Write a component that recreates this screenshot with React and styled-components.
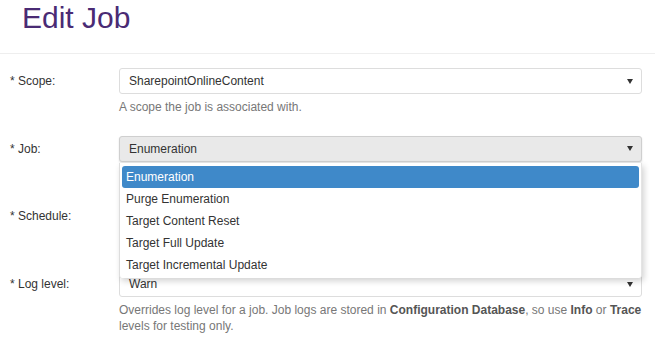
import React from "react";
import styled, { createGlobalStyle } from "styled-components";

const Global = createGlobalStyle`
  html, body { margin: 0; padding: 0; background: #fff; }
  body { font-family: "Liberation Sans", Arial, sans-serif; font-size: 12px; color: #333; }
`;

const Page = styled.div`
  width: 655px;
  height: 340px;
  overflow: hidden;
`;

const Header = styled.div`
  padding: 0 22px 17px;
  border-bottom: 1px solid #eee;
`;

const Title = styled.h1`
  margin: 0;
  font-size: 30px;
  line-height: 36px;
  font-weight: normal;
  color: #4a2b74;
`;

const Form = styled.div`
  padding: 14px 13px 0 10px;
`;

const Group = styled.div`
  display: grid;
  grid-template-columns: 109px 1fr;
  margin-bottom: 20.7px;
`;

const Label = styled.label`
  line-height: 26px;
  color: #333;
`;

const Field = styled.div`
  position: relative;
`;

const Select = styled.div`
  height: 26px;
  box-sizing: border-box;
  border: 1px solid ${(p) => (p.$open ? "#cfcfcf" : "#ddd")};
  border-radius: 3px;
  background: ${(p) => (p.$open ? "#e9e9e9" : "#fff")};
  box-shadow: ${(p) => (p.$open ? "0 1px 2px rgba(0,0,0,0.12)" : "none")};
  display: flex;
  align-items: center;
  padding: 0 8px 0 9px;
  color: #333;
`;

const Value = styled.span`
  flex: 1;
`;

const Arrow = styled.span`
  width: 0;
  height: 0;
  border-left: 3.5px solid transparent;
  border-right: 3.5px solid transparent;
  border-top: 5px solid #333;
`;

const Help = styled.div`
  margin-top: 5px;
  min-height: 16px;
  line-height: 16px;
  color: #777;
  b { color: #555; }
`;

const Menu = styled.ul`
  position: absolute;
  left: 0;
  right: 0;
  top: 27px;
  z-index: 10;
  margin: 0;
  padding: 3px 2px 2px 2px;
  list-style: none;
  background: #fff;
  border-left: 1px solid #ddd;
  border-right: 1px solid #e4e4e4;
  border-radius: 0 0 3px 3px;
  box-shadow: 2px 3px 6px rgba(0, 0, 0, 0.18);
`;

const Item = styled.li`
  height: 22px;
  line-height: 22px;
  padding: 0 4px;
  border-radius: 3px;
  background: ${(p) => (p.$active ? "#3f89c9" : "transparent")};
  color: ${(p) => (p.$active ? "#fff" : "#333")};
`;

const jobs = [
  "Enumeration",
  "Purge Enumeration",
  "Target Content Reset",
  "Target Full Update",
  "Target Incremental Update",
];

export default function App() {
  return (
    <Page>
      <Global />
      <Header>
        <Title>Edit Job</Title>
      </Header>
      <Form>
        <Group>
          <Label>* Scope:</Label>
          <Field>
            <Select>
              <Value>SharepointOnlineContent</Value>
              <Arrow />
            </Select>
            <Help>A scope the job is associated with.</Help>
          </Field>
        </Group>
        <Group>
          <Label>* Job:</Label>
          <Field>
            <Select $open>
              <Value>Enumeration</Value>
              <Arrow />
            </Select>
            <Menu>
              {jobs.map((j, i) => (
                <Item key={j} $active={i === 0}>{j}</Item>
              ))}
            </Menu>
            <Help />
          </Field>
        </Group>
        <Group>
          <Label>* Schedule:</Label>
          <Field>
            <Select>
              <Value />
              <Arrow />
            </Select>
            <Help />
          </Field>
        </Group>
        <Group>
          <Label>* Log level:</Label>
          <Field>
            <Select>
              <Value>Warn</Value>
              <Arrow />
            </Select>
            <Help>
              Overrides log level for a job. Job logs are stored in <b>Configuration Database</b>, so use <b>Info</b> or <b>Trace</b> levels for testing only.
            </Help>
          </Field>
        </Group>
      </Form>
    </Page>
  );
}
